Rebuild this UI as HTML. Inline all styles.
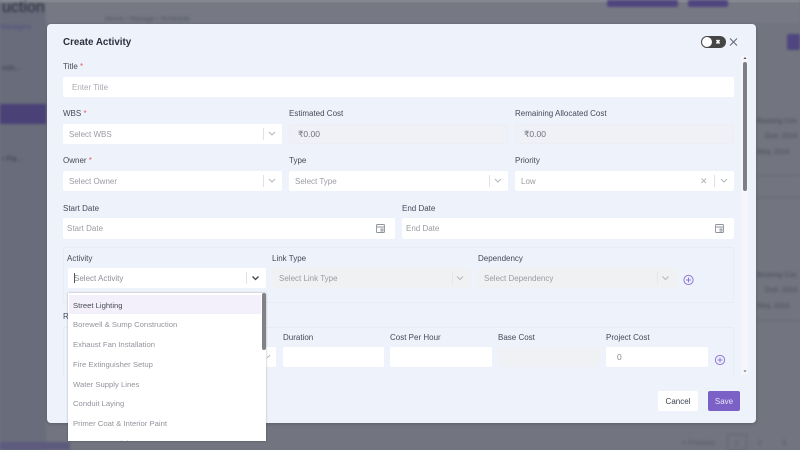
<!DOCTYPE html>
<html>
<head>
<meta charset="utf-8">
<style>
html,body{margin:0;padding:0;width:800px;height:450px;overflow:hidden;background:#72757f;font-family:"Liberation Sans",sans-serif}
#w{position:absolute;left:0;top:0;width:800px;height:450px;overflow:hidden;filter:blur(.35px)}
.a{position:absolute;white-space:nowrap;box-sizing:border-box}
.l{font-size:8px;line-height:12px;color:#454a58;margin-top:1px}
.l i{color:#e0606a;font-style:normal}
.f{background:#fff;border-radius:2px;height:20px;font-size:8px;line-height:22px;color:#9a9ca3;padding-left:6px}
.d{background:#eff1f6;border:1px solid #eceef3;line-height:18px;font-size:8.5px}
.dis{background:#f0f1f3;line-height:22px}
.s{position:absolute;top:4px;height:12px;width:1px;background:#e0e2e6}
svg{position:absolute;overflow:visible}
.bg{position:absolute;filter:blur(1.2px)}
.o{position:absolute;white-space:nowrap;left:5.5px;font-size:7.7px;line-height:20px;color:#93959c;margin-top:1px}
</style>
</head>
<body>
<div id="w">
<!-- blurred background page -->
<div class="bg" style="left:0;top:0;width:800px;height:2px;background:#9a9ca3"></div>
<div class="bg" style="left:0;top:3px;width:46px;height:447px;background:#696c7b"></div>
<div class="bg" style="left:46px;top:3px;width:754px;height:20px;background:#767983"></div>
<div class="bg" style="left:0;top:104px;width:46px;height:20px;background:#4a4276"></div>
<div class="bg" style="left:607px;top:0;width:71px;height:7px;background:#4f4580;border-radius:2px"></div>
<div class="bg" style="left:688px;top:0;width:40px;height:7px;background:#4f4580;border-radius:2px"></div>
<div class="bg" style="left:787px;top:34px;width:13px;height:16px;background:#4f4580;border-radius:2px"></div>
<div class="bg" style="left:0;top:442px;width:70px;height:8px;background:#5e5a7e"></div>
<div class="a bg" style="left:2px;top:-2px;font-size:16px;line-height:20px;color:#2b2e3a">uction</div>
<div class="a bg" style="left:0;top:23px;font-size:7px;line-height:10px;color:#4a4f80">Managers</div>
<div class="a bg" style="left:2px;top:64px;font-size:7px;line-height:10px;color:#3a3d48">ools...</div>
<div class="a bg" style="left:2px;top:155px;font-size:7px;line-height:10px;color:#3a3d48">r Pla...</div>
<div class="a bg" style="left:105px;top:16px;font-size:7px;line-height:8px;color:#555863">Home / Manage / Schedule</div>
<div class="a bg" style="left:757px;top:117px;font-size:7px;line-height:10px;color:#4a4d58">Booking Cos</div>
<div class="a bg" style="left:765px;top:132px;font-size:7px;line-height:10px;color:#4a4d58">Due: 2024</div>
<div class="a bg" style="left:757px;top:148px;font-size:7px;line-height:10px;color:#4a4d58">Req: 2024</div>
<div class="a bg" style="left:757px;top:271px;font-size:7px;line-height:10px;color:#4a4d58">Booking Cos</div>
<div class="a bg" style="left:765px;top:286px;font-size:7px;line-height:10px;color:#4a4d58">Due: 2024</div>
<div class="a bg" style="left:757px;top:302px;font-size:7px;line-height:10px;color:#4a4d58">Req: 2024</div>
<div class="a bg" style="left:682px;top:439px;font-size:7px;line-height:10px;color:#565964">&lt; Previous</div>
<div class="a bg" style="left:735px;top:439px;font-size:7px;line-height:10px;color:#565964">1</div>
<div class="a bg" style="left:758px;top:439px;font-size:7px;line-height:10px;color:#565964">2</div>
<div class="a bg" style="left:782px;top:439px;font-size:7px;line-height:10px;color:#565964">3</div>
<div class="bg" style="left:757px;top:175px;width:43px;height:1px;background:#666974"></div>
<div class="bg" style="left:757px;top:197px;width:43px;height:1px;background:#666974"></div>
<div class="bg" style="left:757px;top:320px;width:43px;height:1px;background:#666974"></div>
<div class="bg" style="left:727px;top:434px;width:20px;height:16px;border:1px solid #62656f;box-sizing:border-box"></div>

<!-- modal -->
<div class="a" style="left:46.5px;top:23.5px;width:709.5px;height:399px;background:#eef2fb;border-radius:4px;box-shadow:0 1px 3px rgba(0,0,0,.2)"></div>

<div class="a" style="left:63px;top:36px;font-size:9.8px;line-height:14px;font-weight:bold;color:#2b2f3c">Create Activity</div>

<!-- toggle -->
<div class="a" style="left:701px;top:36px;width:25px;height:12px;border-radius:6px;background:#454545"></div>
<div class="a" style="left:702px;top:37px;width:10px;height:10px;border-radius:5px;background:#fff"></div>
<svg style="left:0;top:0" width="800" height="450">
<path d="M716.5 40l3 3.5M719.5 40l-3 3.5" stroke="#fff" stroke-width="1.6" fill="none"/>
<path d="M730 38.500l7 7M737 38.500l-7 7" stroke="#5a6070" stroke-width="0.9" fill="none"/>
</svg>

<!-- row 1 -->
<div class="a l" style="left:63px;top:60px">Title <i>*</i></div>
<div class="a f" style="left:63px;top:77px;width:671px;padding-left:9px;color:#a9abb2">Enter Title</div>

<!-- row 2 -->
<div class="a l" style="left:63px;top:107px">WBS <i>*</i></div>
<div class="a f" style="left:63px;top:124px;width:219px">Select WBS<div class="s" style="left:200px"></div></div>
<div class="a l" style="left:289px;top:107px">Estimated Cost</div>
<div class="a f d" style="left:289px;top:124px;width:219px;padding-left:8px;color:#6f727a">₹0.00</div>
<div class="a l" style="left:515px;top:107px">Remaining Allocated Cost</div>
<div class="a f d" style="left:515px;top:124px;width:219px;padding-left:8px;color:#6f727a">₹0.00</div>

<!-- row 3 -->
<div class="a l" style="left:63px;top:154px">Owner <i>*</i></div>
<div class="a f" style="left:63px;top:171px;width:219px">Select Owner<div class="s" style="left:200px"></div></div>
<div class="a l" style="left:289px;top:154px">Type</div>
<div class="a f" style="left:289px;top:171px;width:219px">Select Type<div class="s" style="left:200px"></div></div>
<div class="a l" style="left:515px;top:154px">Priority</div>
<div class="a f" style="left:515px;top:171px;width:219px">Low<div class="s" style="left:199px"></div></div>

<!-- row 4 -->
<div class="a l" style="left:63px;top:202px">Start Date</div>
<div class="a f" style="left:63px;top:218px;width:332px;height:21px;padding-left:4px">Start Date</div>
<div class="a l" style="left:402px;top:202px">End Date</div>
<div class="a f" style="left:402px;top:218px;width:332px;height:21px;padding-left:4px">End Date</div>

<!-- activity box -->
<div class="a" style="left:63px;top:247px;width:671px;height:56px;border:1px solid #e8ecf6;border-radius:2px"></div>
<div class="a l" style="left:67px;top:252px">Activity</div>
<div class="a f" style="left:68px;top:268px;width:198px;border:0;padding-left:6px;color:#8e9097">Select Activity<div class="s" style="left:178px"></div></div>
<div class="a" style="left:74px;top:273px;width:1px;height:10px;background:#555"></div>
<div class="a l" style="left:272px;top:252px">Link Type</div>
<div class="a f dis" style="left:272px;top:268px;width:199px;padding-left:7px">Select Link Type<div class="s" style="left:180px;background:#e6e7ea"></div></div>
<div class="a l" style="left:478px;top:252px">Dependency</div>
<div class="a f dis" style="left:478px;top:268px;width:198px;padding-left:6px">Select Dependency<div class="s" style="left:179px;background:#e6e7ea"></div></div>

<!-- resource box -->
<div class="a l" style="left:63px;top:310px">Resource</div>
<div class="a" style="left:63px;top:327px;width:671px;height:49px;border:1px solid #e8ecf6;border-bottom:0;border-radius:2px"></div>
<div class="a f" style="left:200px;top:347px;width:76px"></div>
<div class="a l" style="left:283px;top:331px">Duration</div>
<div class="a f" style="left:283px;top:347px;width:101px"></div>
<div class="a l" style="left:390px;top:331px">Cost Per Hour</div>
<div class="a f" style="left:390px;top:347px;width:102px"></div>
<div class="a l" style="left:498px;top:331px">Base Cost</div>
<div class="a f dis" style="left:498px;top:347px;width:102px;background:#eff1f5"></div>
<div class="a l" style="left:606px;top:331px">Project Cost</div>
<div class="a f" style="left:606px;top:347px;width:102px;padding-left:11px;font-size:8.5px;line-height:20px;color:#85878e">0</div>

<!-- modal scrollbar -->
<div class="a" style="left:741px;top:56px;width:7px;height:318px;background:#f4f6fc"></div>
<div class="a" style="left:743px;top:62px;width:4px;height:129px;background:#7d7f87;border-radius:2px"></div>
<svg style="left:0;top:0" width="800" height="450">
<path d="M745 57l-1.5 2h3zM745 372l-1.5-1.5h3z" fill="#555"/>
<g fill="none" stroke="#b4b6bc" stroke-width="1">
<path d="M269 132l3 3 3-3M269 179l3 3 3-3M495 179l3 3 3-3M721 179l3 3 3-3"/>
<path d="M701.5 178.500l4.500 4.500M706 178.500l-4.500 4.500"/>
<path d="M457 276.500l3 3 3-3M662.500 276.500l3 3 3-3"/>
<path d="M267 358l3-3"/>
</g>
<path d="M252.500 276.500l3 3 3-3" fill="none" stroke="#444" stroke-width="1.300"/>
<g fill="none" stroke="#8f929a" stroke-width="0.900">
<rect x="376.500" y="224.500" width="8" height="8" rx="1"/><path d="M376.500 227h8M381 229h2v2h-2z"/>
<rect x="715.500" y="224.500" width="8" height="8" rx="1"/><path d="M715.500 227h8M720 229h2v2h-2z"/>
</g>
<g fill="none" stroke="#8f78d8" stroke-width="1">
<circle cx="688.500" cy="280" r="4.600"/><path d="M688.500 277.500v5M686 280h5"/>
<circle cx="720" cy="360" r="4.600"/><path d="M720 357.500v5M717.500 360h5"/>
</g>
</svg>

<!-- dropdown -->
<div class="a" style="left:67.500px;top:292.500px;width:198.500px;height:148px;background:#fff;overflow:hidden;box-shadow:0 0 2px rgba(0,0,0,.3)">
  <div class="a" style="left:1.500px;top:2px;width:192px;height:19.500px;background:#f3effb"></div>
  <div class="a" style="left:194.500px;top:0;width:4px;height:57px;background:#808288;border-radius:2px"></div>
  <div class="o" style="top:2px;color:#4a4d58">Street Lighting</div>
  <div class="o" style="top:21.500px">Borewell &amp; Sump Construction</div>
  <div class="o" style="top:41.500px">Exhaust Fan Installation</div>
  <div class="o" style="top:61px">Fire Extinguisher Setup</div>
  <div class="o" style="top:81px">Water Supply Lines</div>
  <div class="o" style="top:100.500px">Conduit Laying</div>
  <div class="o" style="top:120.500px">Primer Coat &amp; Interior Paint</div>
  <div class="o" style="top:140px">Door Frame Fixing</div>
</div>

<!-- buttons -->
<div class="a" style="left:658px;top:391px;width:40px;height:20px;background:#fff;border-radius:2px;font-size:8px;line-height:22px;text-align:center;color:#3d4250">Cancel</div>
<div class="a" style="left:708px;top:391px;width:32px;height:20px;background:#7b60c6;border-radius:2px;font-size:8px;line-height:22px;text-align:center;color:#e8e3f6">Save</div>
</div>
</body>
</html>
